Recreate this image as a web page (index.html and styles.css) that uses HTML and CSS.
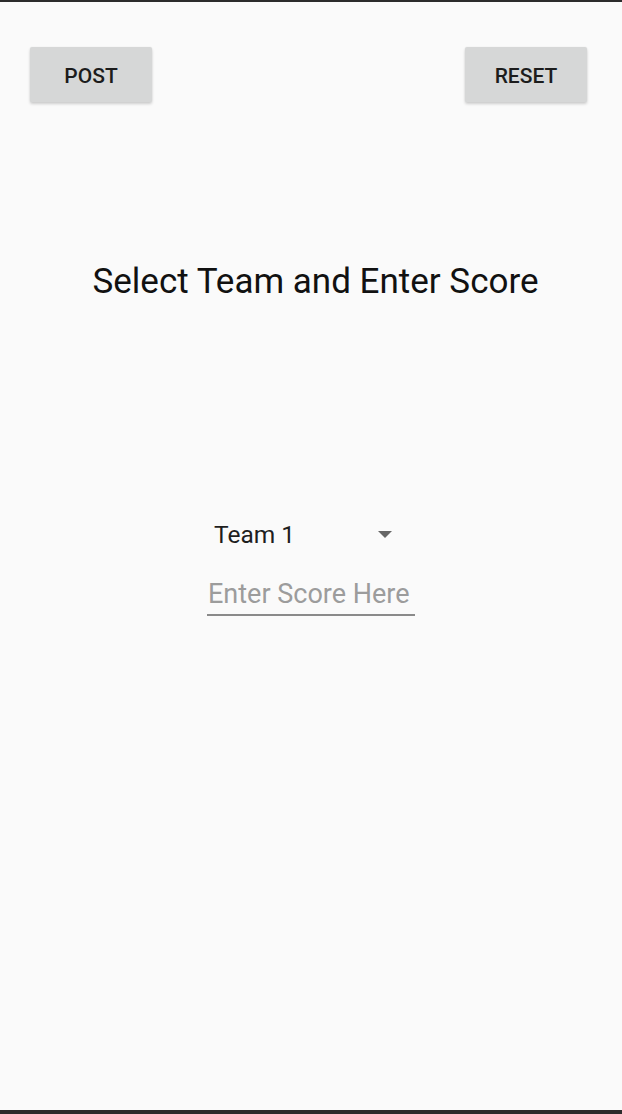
FILE: index.html
```html
<!DOCTYPE html>
<html>
<head>
<meta charset="utf-8">
<link rel="stylesheet" href="styles.css">
</head>
<body>
<div class="screen">
  <div class="status-line"></div>
  <div class="actions">
    <button class="btn">POST</button>
    <button class="btn">RESET</button>
  </div>
  <h1 class="title">Select Team and Enter Score</h1>
  <div class="form">
    <div class="spinner">
      <span class="spinner-text">Team 1</span>
      <svg class="spinner-arrow" width="14" height="7" viewBox="0 0 14 7"><path d="M0 0 L14 0 L7 7 Z" fill="#666"/></svg>
    </div>
    <div class="field">Enter Score Here</div>
  </div>
  <div class="spacer"></div>
  <div class="nav-line"></div>
</div>
</body>
</html>
```

FILE: styles.css
```css
html, body {
  margin: 0;
  padding: 0;
  background: #fafafa;
}
.screen {
  display: flex;
  flex-direction: column;
  min-height: 1114px;
  font-family: Roboto, "Liberation Sans", sans-serif;
}
.status-line {
  height: 2px;
  background: #2c2c2c;
}
.nav-line {
  height: 4px;
  background: #2c2c2c;
}
.spacer {
  flex: 1;
}
.actions {
  display: flex;
  justify-content: space-between;
  padding: 45px 35px 0 30px;
}
.btn {
  width: 122px;
  height: 55px;
  border: none;
  border-radius: 2px;
  background: #d6d7d7;
  color: #1c1c1c;
  font-family: Roboto, "Liberation Sans", sans-serif;
  font-weight: 500;
  font-size: 21px;
  padding: 3px 0 0 0;
  box-shadow: 0 2px 3px rgba(0,0,0,0.18), 0 0 2px rgba(0,0,0,0.06);
}
.title {
  margin: 162px 0 0 0;
  padding-left: 9px;
  text-align: center;
  font-weight: 400;
  font-size: 35px;
  line-height: 36px;
  color: #111;
}
.form {
  margin-top: 214px;
  display: flex;
  flex-direction: column;
  align-items: center;
}
.spinner {
  width: 208px;
  height: 40px;
  display: flex;
  align-items: center;
  justify-content: space-between;
  box-sizing: border-box;
  padding: 0 23px 0 7px;
}
.spinner-text {
  font-size: 24.5px;
  color: #1e1e1e;
}
.field {
  margin-top: 24px;
  width: 208px;
  box-sizing: border-box;
  padding: 0 0 4px 1px;
  border-bottom: 2px solid #8a8a8a;
  font-size: 27px;
  line-height: 32px;
  color: #9c9c9c;
  white-space: nowrap;
}
```
